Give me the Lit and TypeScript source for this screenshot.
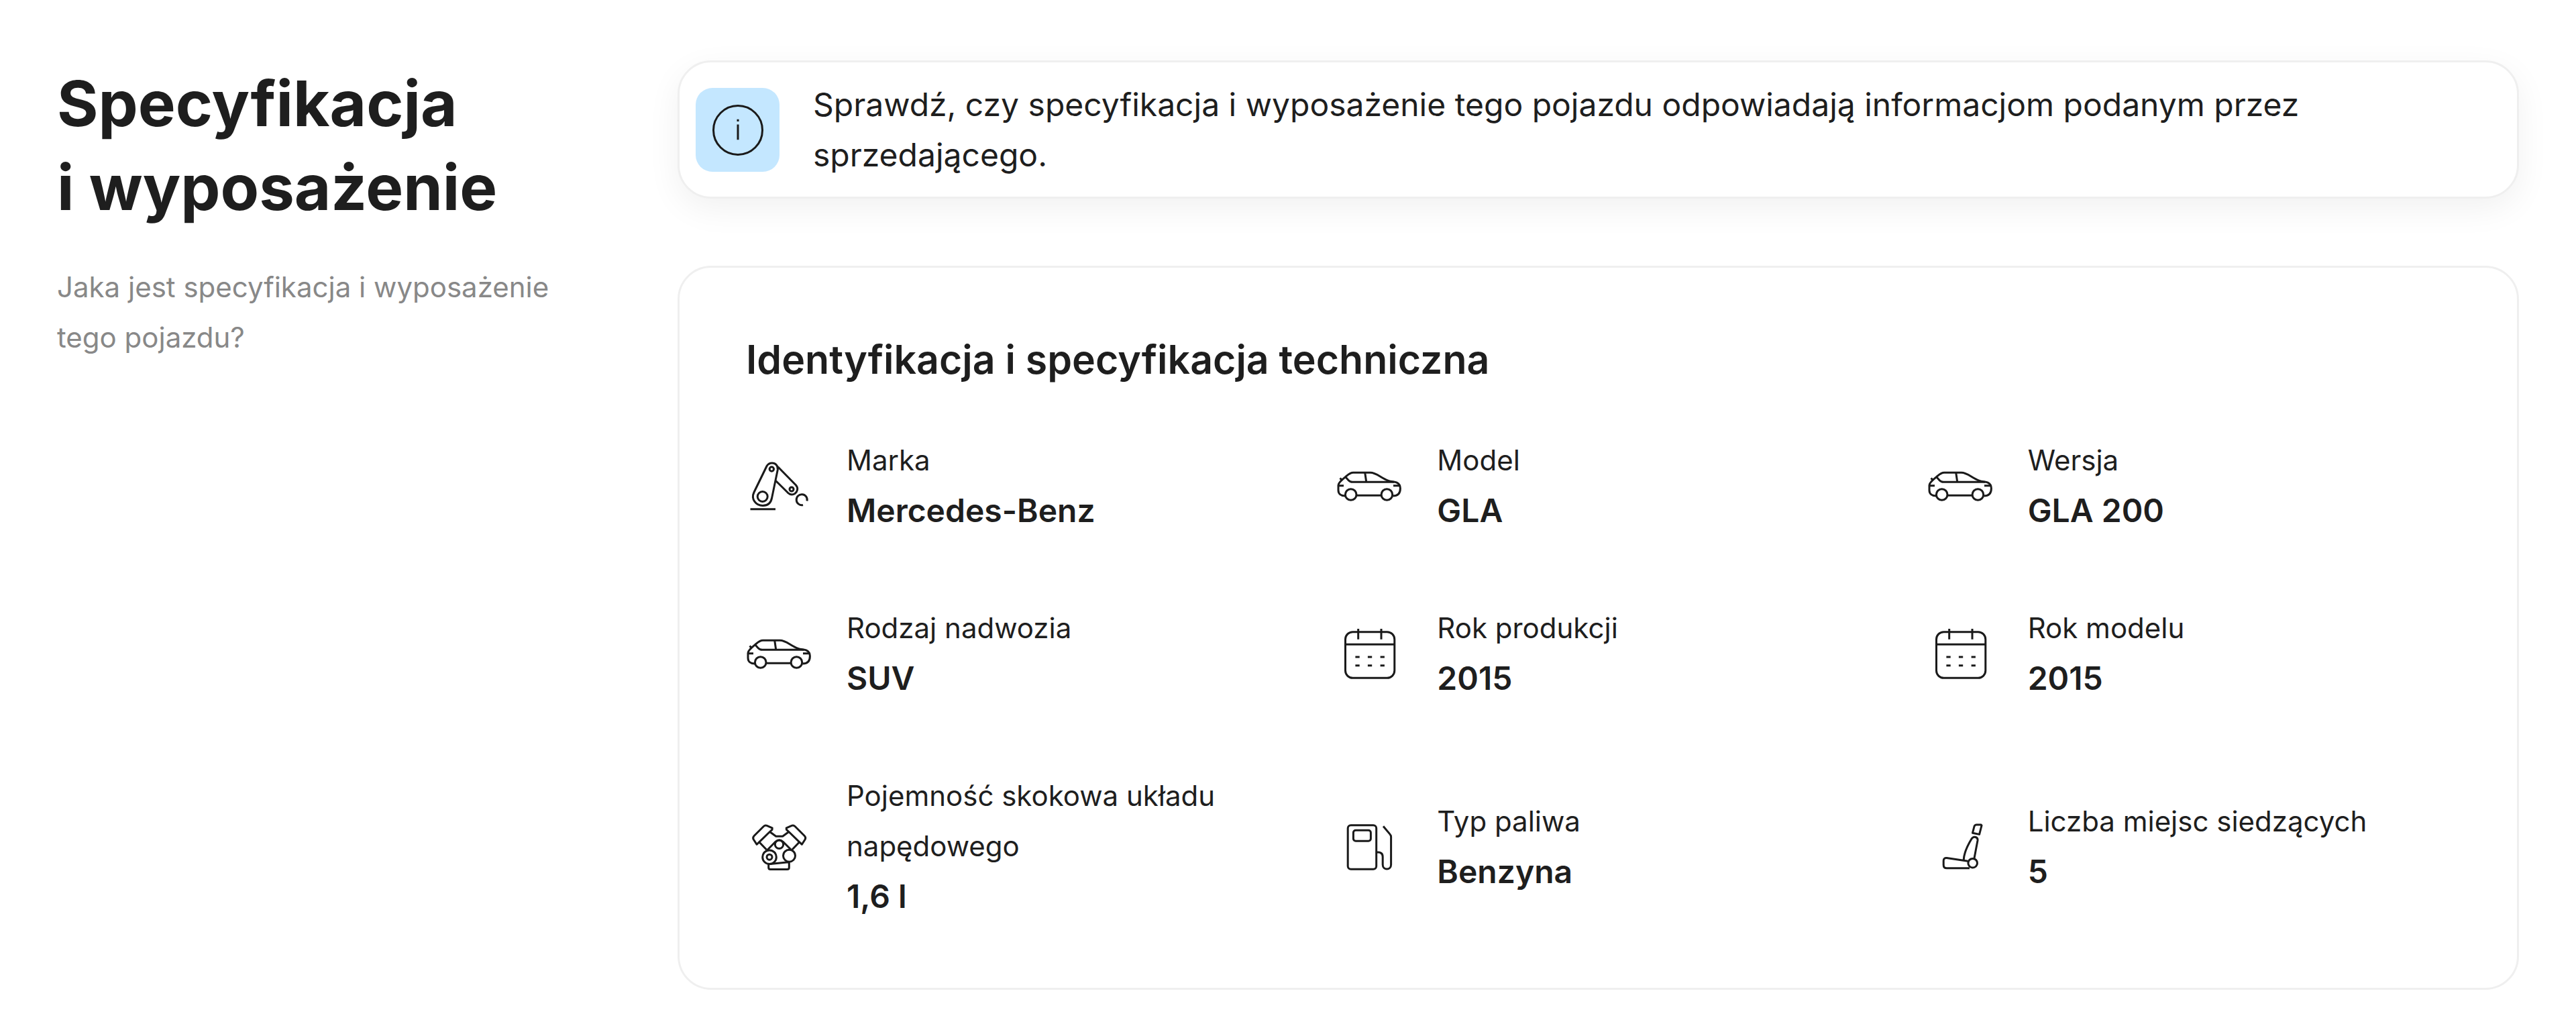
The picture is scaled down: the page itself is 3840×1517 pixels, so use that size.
import { LitElement, html, svg, css, type SVGTemplateResult } from "lit";
import { customElement, property } from "lit/decorators.js";

type IconName = "arm" | "car" | "calendar" | "engine" | "fuel" | "seat" | "info";

const ICONS: Record<IconName, SVGTemplateResult> = {
  arm: svg`
    <path d="M31 21.5 12 60.5C7 71 15 80.5 25 80.5c8 0 12.500-5 13.700-12L47.300 27C48 21 44 17 39 17c-4 0-6.500 2-8 4.500Z"/>
    <circle cx="38.300" cy="26" r="3.200"/>
    <circle cx="24.700" cy="67" r="7.500"/>
    <path d="M47.500 22.500 74.500 50c4 4.500 2 10-1.500 12.500-3.500 2.300-7.500 1.500-10.500-1.200L44.500 43.500"/>
    <circle cx="68" cy="56" r="3"/>
    <path d="M91 73.500a8 8 0 1 0-6 6"/>
    <path d="M6.500 85.700h37.500"/>`,
  car: svg`
    <circle cx="21.700" cy="64" r="8.300"/>
    <circle cx="75.400" cy="64" r="8.300"/>
    <path d="M30.300 65.300H67M13.400 66C7 66 3 63 3 57.500V50c0-3.500 5-7.500 10.700-12.300 3.800-3.200 6.500-6.400 11.500-6.400h25.500c9 0 15 7.500 27 12.200 4 1.500 9.500 1.200 12.500 2.700 3.500 1.800 5.200 5.500 5.200 8.500 0 6.500-3 11.300-11 11.300"/>
    <path d="M13.700 37.700l4.500 5c1.800 2 3.500 2.600 6.100 2.600h62M42.700 31.300l2 13.700M3 50.700h8M85 50.700h10M5.400 39.700l2.800 2.300"/>`,
  calendar: svg`
    <rect x="13.500" y="18.700" width="73.300" height="68.600" rx="11"/>
    <path d="M13.500 37.300h73.300M32.700 14v15.700M67 14v15.700M28.400 56h6.300M46.900 56h6.300M65.600 56h6.300M28.400 68.700h6.300M46.900 68.700h6.300M65.600 68.700h6.300"/>`,
  engine: svg`
    <path d="M26.500 20.300 12.200 34.500c-1.800 1.800-2 3.300-1 5.200l4.800 7.600 3.700-3.500L35.500 28.500l3.500-3.200.2-2.500-8-3.500c-2-.8-3.200-.5-4.700 1Z"/>
    <path d="M72.900 20.300 87.200 34.500c1.800 1.800 2 3.300 1 5.200l-4.800 7.600-3.700-3.500L63.900 28.500l-3.500-3.200-.2-2.500 8-3.500c2-.8 3.200-.5 4.700 1Z"/>
    <path d="M35.500 28.500l9.200 6.700h10l9.200-6.700M19.700 43.800l11 11.400M79.700 43.800l-11 11.400M32 55.500l12-12.200c3.500-3.200 7.700-3.200 11.200 0L67 55"/>
    <circle cx="49.500" cy="47.400" r="6.200"/>
    <circle cx="35" cy="66.200" r="10.300"/>
    <circle cx="35" cy="66.200" r="4"/>
    <circle cx="64.500" cy="64.200" r="9"/>
    <path d="M36 76.500l29.500-3M33.700 76.500v5.300c0 1.600 1.200 2.800 2.800 2.800h25c1.600 0 2.800-1.200 2.800-2.800v-8"/>`,
  fuel: svg`
    <rect x="17.200" y="18.800" width="42.500" height="65.400" rx="4.500"/>
    <rect x="25.400" y="26.300" width="26" height="15.900" rx="3.500"/>
    <path d="M59.700 58.900h2.500c4.500 0 7 2.600 7 7.100v11.500c0 8.600 12.400 8.600 12.400 0V36c0-1.600-.4-2.500-1.400-3.600L70 20.200"/>`,
  seat: svg`
    <path d="M73.500 18h6.700l.8 1.200-3.400 13.200-10.100-2.200L70 20.500c.6-1.800 1.600-2.500 3.500-2.500Z"/>
    <path d="M54.200 70.500c.5-12 6-22 11.800-31.500 3.200-5 9.700-2.600 9 2.500L70 68"/>
    <circle cx="67.700" cy="75.200" r="6.800"/>
    <path d="M60.500 72.300 29 67.600c-3-.4-4.800 1.200-4.800 3.900v6.500c0 3.200 1.600 4.800 4.800 4.800h34"/>`,
  info: svg`
    <circle cx="50" cy="51" r="36.500"/>
    <path d="M50 42.500v22.700M50 34.800v3.200"/>`,
};

@customElement("line-icon")
export class LineIcon extends LitElement {
  @property() name: IconName = "car";

  static styles = css`
    :host {
      display: block;
      flex: none;
      width: 100px;
      height: 100px;
    }
    .glyph {
      display: block;
      width: 100%;
      height: 100%;
      fill: none;
      stroke: #1a1a1a;
      stroke-width: 3;
      stroke-linejoin: round;
    }
  `;

  render() {
    return html`<svg class="glyph" viewBox="0 0 100 100" aria-hidden="true">${ICONS[this.name]}</svg>`;
  }
}

interface Spec {
  icon: IconName;
  label: string;
  value: string;
}

const SPECS: Spec[] = [
  { icon: "arm", label: "Marka", value: "Mercedes-Benz" },
  { icon: "car", label: "Model", value: "GLA" },
  { icon: "car", label: "Wersja", value: "GLA 200" },
  { icon: "car", label: "Rodzaj nadwozia", value: "SUV" },
  { icon: "calendar", label: "Rok produkcji", value: "2015" },
  { icon: "calendar", label: "Rok modelu", value: "2015" },
  { icon: "engine", label: "Pojemność skokowa układu napędowego", value: "1,6 l" },
  { icon: "fuel", label: "Typ paliwa", value: "Benzyna" },
  { icon: "seat", label: "Liczba miejsc siedzących", value: "5" },
];

@customElement("app-root")
export class AppRoot extends LitElement {
  static styles = css`
    :host {
      display: block;
      color: #1e1e1e;
      font-family: Inter, "Liberation Sans", sans-serif;
      font-size: 42px;
      line-height: 75px;
    }
    .page {
      display: grid;
      grid-template-columns: repeat(4, minmax(0, 1fr));
      column-gap: 30px;
      align-items: start;
      padding: 90px 85px 42px;
    }
    .intro {
      padding: 2px 100px 0 0;
    }
    .heading {
      margin: 0;
      font-size: 94px;
      font-weight: 700;
      line-height: 125px;
    }
    .lead {
      margin: 48px 0 0;
      color: #888;
    }
    .content {
      grid-column: span 3;
      display: flex;
      flex-direction: column;
      gap: 100px;
    }
    .card {
      border: 3px solid #efefef;
      border-radius: 50px;
      background: #fff;
    }
    .notice {
      display: flex;
      align-items: center;
      gap: 50px;
      padding: 25px 24px;
      box-shadow: 0 15px 50px rgba(0, 0, 0, 0.06);
      font-size: 48px;
    }
    .notice-text {
      margin: 0;
    }
    .badge {
      display: flex;
      flex: none;
      align-items: center;
      justify-content: center;
      width: 125px;
      height: 125px;
      border-radius: 25px;
      background: #c4e7ff;
    }
    .details {
      padding: 99px;
    }
    .title {
      margin: 0 0 75px;
      font-size: 59px;
      font-weight: 600;
    }
    .specs {
      display: grid;
      grid-template-columns: repeat(3, minmax(0, 1fr));
      gap: 100px;
      margin: 0;
    }
    .spec {
      display: flex;
      align-items: center;
      gap: 50px;
    }
    .value {
      margin: 0;
      font-size: 48px;
      font-weight: 600;
    }
  `;

  render() {
    return html`
      <main class="page">
        <header class="intro">
          <h1 class="heading">Specyfikacja i&nbsp;wyposażenie</h1>
          <p class="lead">Jaka jest specyfikacja i&nbsp;wyposażenie tego pojazdu?</p>
        </header>
        <div class="content">
          <aside class="card notice">
            <span class="badge"><line-icon name="info"></line-icon></span>
            <p class="notice-text">
              Sprawdź, czy specyfikacja i&nbsp;wyposażenie tego pojazdu odpowiadają informacjom podanym przez
              sprzedającego.
            </p>
          </aside>
          <section class="card details">
            <h2 class="title">Identyfikacja i specyfikacja techniczna</h2>
            <dl class="specs">
              ${SPECS.map(
                (spec) => html`
                  <div class="spec">
                    <line-icon name=${spec.icon}></line-icon>
                    <div class="text">
                      <dt class="label">${spec.label}</dt>
                      <dd class="value">${spec.value}</dd>
                    </div>
                  </div>
                `
              )}
            </dl>
          </section>
        </div>
      </main>
    `;
  }
}
